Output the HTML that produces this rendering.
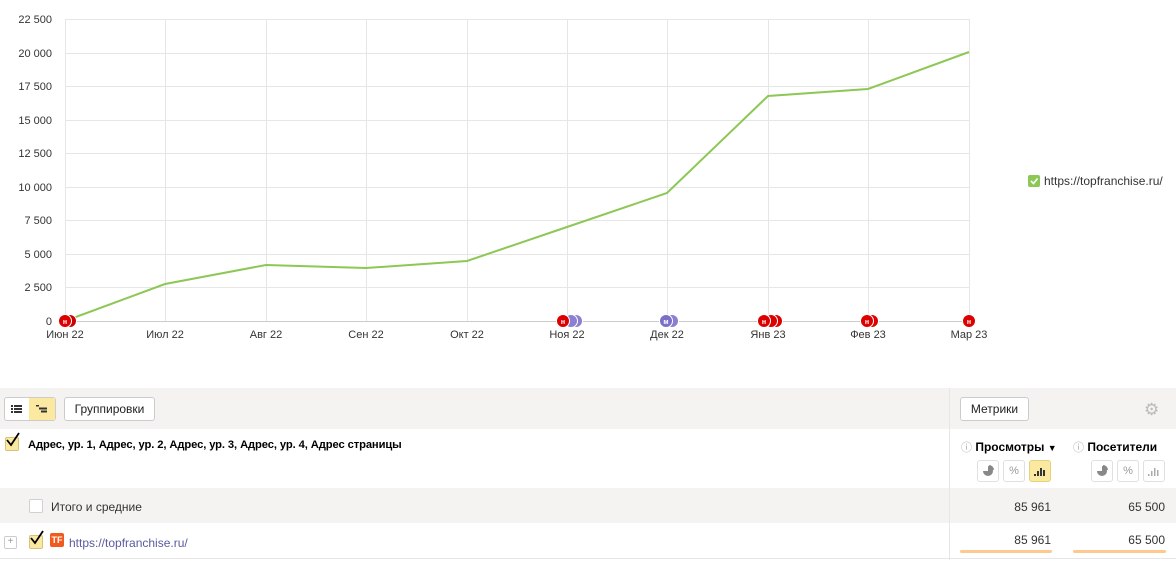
<!DOCTYPE html>
<html><head><meta charset="utf-8"><style>
body{margin:0;width:1176px;height:562px;background:#fff;font-family:"Liberation Sans",sans-serif;font-size:12px;color:#000;position:relative;overflow:hidden}
.a{position:absolute}
.btn{position:absolute;border:1px solid #ccc;border-radius:3px;background:#fff;font-size:12px;text-align:center;box-sizing:border-box}
.cb{position:absolute;width:14px;height:14px;border:1px solid #d0d0d0;border-radius:2px;background:#fff;box-sizing:border-box}
.cb.on{background:#fbe9a1;border-color:#d6c27a}
.ib{position:absolute;width:22px;height:22px;border:1px solid #e0e0e0;border-radius:3px;box-sizing:border-box;font-size:11px;color:#999;text-align:center;line-height:20px}
.ib svg{position:absolute;left:4px;top:4px}
</style></head><body>
<svg class="a" style="left:0;top:0" width="1176" height="350">
<g stroke="#e6e6e6" stroke-width="1">
<line x1="65" x2="969" y1="19.5" y2="19.5"/><line x1="65" x2="969" y1="53.5" y2="53.5"/><line x1="65" x2="969" y1="86.5" y2="86.5"/><line x1="65" x2="969" y1="120.5" y2="120.5"/><line x1="65" x2="969" y1="153.5" y2="153.5"/><line x1="65" x2="969" y1="187.5" y2="187.5"/><line x1="65" x2="969" y1="220.5" y2="220.5"/><line x1="65" x2="969" y1="254.5" y2="254.5"/><line x1="65" x2="969" y1="287.5" y2="287.5"/>
<line x1="65.5" x2="65.5" y1="19" y2="321"/><line x1="165.5" x2="165.5" y1="19" y2="321"/><line x1="266.5" x2="266.5" y1="19" y2="321"/><line x1="366.5" x2="366.5" y1="19" y2="321"/><line x1="467.5" x2="467.5" y1="19" y2="321"/><line x1="567.5" x2="567.5" y1="19" y2="321"/><line x1="667.5" x2="667.5" y1="19" y2="321"/><line x1="768.5" x2="768.5" y1="19" y2="321"/><line x1="868.5" x2="868.5" y1="19" y2="321"/><line x1="969.5" x2="969.5" y1="19" y2="321"/>
</g>
<line x1="65" x2="969" y1="321.5" y2="321.5" stroke="#ccc"/>
<g font-size="11" fill="#333" text-anchor="end">
<text x="52" y="23">22 500</text><text x="52" y="57">20 000</text><text x="52" y="90">17 500</text><text x="52" y="124">15 000</text><text x="52" y="157">12 500</text><text x="52" y="191">10 000</text><text x="52" y="224">7 500</text><text x="52" y="258">5 000</text><text x="52" y="291">2 500</text><text x="52" y="325">0</text></g>
<g font-size="11" fill="#333" text-anchor="middle">
<text x="65" y="338">Июн 22</text><text x="165" y="338">Июл 22</text><text x="266" y="338">Авг 22</text><text x="366" y="338">Сен 22</text><text x="467" y="338">Окт 22</text><text x="567" y="338">Ноя 22</text><text x="667" y="338">Дек 22</text><text x="768" y="338">Янв 23</text><text x="868" y="338">Фев 23</text><text x="969" y="338">Мар 23</text></g>
<polyline fill="none" stroke="#8dc755" stroke-width="2" points="65,321 165,284 266,265 366,268 467,261 567,227 667,193 768,96 868,89 969,52"/>
<g font-size="7" font-weight="bold" fill="#fff" text-anchor="middle">
<circle cx="70" cy="321" r="6.5" fill="#c00" stroke="#fff"/><circle cx="65" cy="321" r="6.5" fill="#d00" stroke="#fff"/><text x="65" y="324">н</text>
<circle cx="576" cy="321" r="6.5" fill="#8a7fd0" stroke="#fff"/><circle cx="571" cy="321" r="6.5" fill="#8a7fd0" stroke="#fff"/><circle cx="563" cy="321" r="6.5" fill="#d00" stroke="#fff"/><text x="563" y="324">н</text>
<circle cx="672" cy="321" r="6.5" fill="#8a7fd0" stroke="#fff"/><circle cx="666" cy="321" r="6.5" fill="#7a70c8" stroke="#fff"/><text x="666" y="324">м</text>
<circle cx="776" cy="321" r="6.5" fill="#d00" stroke="#fff"/><circle cx="771" cy="321" r="6.5" fill="#d00" stroke="#fff"/><circle cx="764" cy="321" r="6.5" fill="#d00" stroke="#fff"/><text x="764" y="324">н</text>
<circle cx="872" cy="321" r="6.5" fill="#d00" stroke="#fff"/><circle cx="867" cy="321" r="6.5" fill="#d00" stroke="#fff"/><text x="867" y="324">н</text>
<circle cx="969" cy="321" r="6.5" fill="#d00" stroke="#fff"/><text x="969" y="324">н</text></g>
<rect x="1028" y="175" width="12" height="12" rx="2" fill="#8dc755"/><path d="M1031 181l2.5 2.5 4-5" stroke="#fff" stroke-width="1.6" fill="none"/>
<text x="1044" y="185" font-size="12" fill="#333">https://topfranchise.ru/</text>
</svg>
<div class="a" style="left:0;top:388px;width:1176px;height:41px;background:#f4f3f1"></div>
<div class="a" style="left:0;top:488px;width:1176px;height:35px;background:#f4f3f1"></div>
<div class="a" style="left:0;top:558px;width:1176px;height:1px;background:#e6e6e6"></div>
<div class="a" style="left:949px;top:388px;width:1px;height:172px;background:#e6e6e6"></div>
<div class="btn" style="left:4px;top:397px;width:52px;height:24px"></div>
<div class="a" style="left:29px;top:398px;width:26px;height:22px;background:#fbe9a1"></div>
<svg class="a" style="left:11px;top:404px" width="12" height="10"><g fill="#333"><rect x="0" y="1" width="2" height="2"/><rect x="3" y="1" width="8" height="2"/><rect x="0" y="4" width="2" height="2"/><rect x="3" y="4" width="8" height="2"/><rect x="0" y="7" width="2" height="2"/><rect x="3" y="7" width="8" height="2"/></g></svg>
<svg class="a" style="left:36px;top:404px" width="12" height="10"><g fill="#333"><rect x="0" y="1" width="3" height="1.5"/><rect x="3" y="3.5" width="8" height="2"/><rect x="5" y="6.5" width="6" height="2"/></g></svg>
<div class="btn" style="left:64px;top:397px;width:91px;height:24px;line-height:22px;color:#222">Группировки</div>
<div class="btn" style="left:960px;top:397px;width:69px;height:24px;line-height:22px;color:#222">Метрики</div>
<div class="a" style="left:1144px;top:400px;font-size:17px;color:#bbb">⚙</div>
<div class="cb on" style="left:5px;top:437px"></div>
<svg class="a" style="left:5px;top:432px" width="16" height="16"><path d="M2 8l4 5 8-12" stroke="#000" stroke-width="1.8" fill="none"/></svg>
<div class="a" style="left:28px;top:439px;font-weight:bold;font-size:11.2px;letter-spacing:-0.1px">Адрес, ур. 1, Адрес, ур. 2, Адрес, ур. 3, Адрес, ур. 4, Адрес страницы</div>
<div class="a" style="left:961px;top:439px;font-weight:bold"><span style="color:#aaa;font-weight:normal;font-size:11px">ⓘ</span> Просмотры <span style="font-size:9px">▼</span></div>
<div class="a" style="left:1073px;top:439px;font-weight:bold"><span style="color:#aaa;font-weight:normal;font-size:11px">ⓘ</span> Посетители</div>
<div class="ib" style="left:977px;top:460px"><svg width="12" height="12"><path d="M6 6V1a5 5 0 1 1-5 5z" fill="#888"/><path d="M7 5V0a5 5 0 0 1 5 5z" fill="#888"/></svg></div>
<div class="ib" style="left:1003px;top:460px">%</div>
<div class="ib" style="left:1029px;top:460px;background:#fbe9a1;border-color:#e5d07f"><svg width="12" height="12"><g fill="#333"><rect x="0" y="9" width="2" height="2"/><rect x="3" y="6" width="2" height="5"/><rect x="6" y="3" width="2" height="8"/><rect x="9" y="5" width="2" height="6"/></g></svg></div>
<div class="ib" style="left:1091px;top:460px"><svg width="12" height="12"><path d="M6 6V1a5 5 0 1 1-5 5z" fill="#888"/><path d="M7 5V0a5 5 0 0 1 5 5z" fill="#888"/></svg></div>
<div class="ib" style="left:1117px;top:460px">%</div>
<div class="ib" style="left:1143px;top:460px"><svg width="12" height="12"><g fill="#aaa"><rect x="0" y="9" width="1.5" height="2"/><rect x="3" y="6" width="1.5" height="5"/><rect x="6" y="3" width="1.5" height="8"/><rect x="9" y="5" width="1.5" height="6"/></g></svg></div>
<div class="cb" style="left:29px;top:499px"></div>
<div class="a" style="left:51px;top:500px;color:#333">Итого и средние</div>
<div class="a" style="left:1000px;top:500px;width:51px;text-align:right;color:#333">85 961</div>
<div class="a" style="left:1100px;top:500px;width:65px;text-align:right;color:#333">65 500</div>
<div class="a" style="left:4px;top:536px;width:11px;height:11px;border:1px solid #ccc;border-radius:2px;font-size:10px;line-height:10px;text-align:center;color:#999">+</div>
<div class="cb on" style="left:29px;top:535px"></div>
<svg class="a" style="left:29px;top:530px" width="16" height="16"><path d="M2 8l4 5 8-12" stroke="#000" stroke-width="1.8" fill="none"/></svg>
<div class="a" style="left:50px;top:533px;width:14px;height:14px;background:#f05a1e;border-radius:2px;color:#fff;font-size:9px;font-weight:bold;line-height:14px;text-align:center">TF</div>
<div class="a" style="left:69px;top:536px;color:#5a5aa0">https://topfranchise.ru/</div>
<div class="a" style="left:1000px;top:533px;width:51px;text-align:right;color:#333">85 961</div>
<div class="a" style="left:1100px;top:533px;width:65px;text-align:right;color:#333">65 500</div>
<div class="a" style="left:960px;top:550px;width:92px;height:3px;background:#fdc98f;border-radius:2px"></div>
<div class="a" style="left:1073px;top:550px;width:93px;height:3px;background:#fdc98f;border-radius:2px"></div>
</body></html>
